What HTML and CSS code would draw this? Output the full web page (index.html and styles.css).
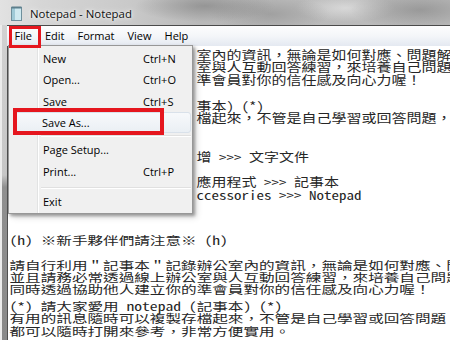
FILE: index.html
```html
<!DOCTYPE html>
<html lang="zh-Hant">
<head>
<meta charset="utf-8">
<title>Notepad - Notepad</title>
<link rel="stylesheet" href="styles.css">
</head>
<body>
<div class="window">
  <div class="titlebar">
    <svg class="app-icon" width="12" height="15" viewBox="0 0 12 15">
      <rect x="0.5" y="1.5" width="10" height="13" fill="#cfe9f0" stroke="#6f8f9c"/>
      <rect x="1" y="2" width="3" height="12" fill="#9fc9d6"/>
      <rect x="0.5" y="0.5" width="10" height="2" fill="#5d7f8c"/>
    </svg>
    <span class="title">Notepad - Notepad</span>
  </div>
  <div class="body">
    <div class="frame-left"></div>
    <div class="main">
      <nav class="menubar">
        <span class="menu-item">File</span>
        <span class="menu-item">Edit</span>
        <span class="menu-item">Format</span>
        <span class="menu-item">View</span>
        <span class="menu-item">Help</span>
      </nav>
      <div class="editor">
        <div class="page page-top">
          <div class="line">室內的資訊，無論是如何對應、問題解決</div>
          <div class="line">室與人互動回答練習，來培養自己問題</div>
          <div class="line">準會員對你的信任感及向心力喔！</div>
          <div class="line"></div>
          <div class="line">事本) (*)</div>
          <div class="line">檔起來，不管是自己學習或回答問題，</div>
          <div class="line"></div>
          <div class="line"></div>
          <div class="line">增 &gt;&gt;&gt; 文字文件</div>
          <div class="line"></div>
          <div class="line">應用程式 &gt;&gt;&gt; 記事本</div>
          <div class="line">ccessories &gt;&gt;&gt; Notepad</div>
        </div>
        <div class="page page-bottom">
          <div class="para">
            <div class="line">(h) ※新手夥伴們請注意※ (h)</div>
          </div>
          <div class="para">
            <div class="line">請自行利用＂記事本＂記錄辦公室內的資訊，無論是如何對應、問題解決</div>
            <div class="line">並且請務必常透過線上辦公室與人互動回答練習，來培養自己問題</div>
            <div class="line">同時透過協助他人建立你的準會員對你的信任感及向心力喔！</div>
          </div>
          <div class="para">
            <div class="line">(*) 請大家愛用 notepad (記事本) (*)</div>
            <div class="line">有用的訊息隨時可以複製存檔起來，不管是自己學習或回答問題，</div>
            <div class="line">都可以隨時打開來參考，非常方便實用。</div>
          </div>
        </div>
      </div>
    </div>
  </div>

  <div class="dropdown">
    <div class="dd-item"><span class="dd-label">New</span><span class="dd-key">Ctrl+N</span></div>
    <div class="dd-item"><span class="dd-label">Open...</span><span class="dd-key">Ctrl+O</span></div>
    <div class="dd-item"><span class="dd-label">Save</span><span class="dd-key">Ctrl+S</span></div>
    <div class="dd-item is-hover"><span class="dd-label">Save As...</span><span class="dd-key"></span></div>
    <div class="dd-sep sep-a"></div>
    <div class="dd-item"><span class="dd-label">Page Setup...</span><span class="dd-key"></span></div>
    <div class="dd-item"><span class="dd-label">Print...</span><span class="dd-key">Ctrl+P</span></div>
    <div class="dd-sep sep-b"></div>
    <div class="dd-item"><span class="dd-label">Exit</span><span class="dd-key"></span></div>
  </div>

  <div class="mark mark-file"></div>
  <div class="mark mark-saveas"></div>
</div>
</body>
</html>
```

FILE: styles.css
```css
* { box-sizing: border-box; }
html, body { margin: 0; padding: 0; }
body {
  width: 450px;
  height: 340px;
  overflow: hidden;
  background: #fff;
  font-family: "Open Sans", "Noto Sans", sans-serif;
}
.window {
  position: relative;
  width: 450px;
  height: 340px;
  overflow: hidden;
  display: flex;
  flex-direction: column;
}
.titlebar {
  height: 25px;
  flex: none;
  display: flex;
  align-items: center;
  gap: 7px;
  padding-left: 11px;
  background:
    radial-gradient(ellipse 70px 16px at 205px 6px, rgba(120,120,120,.55), rgba(120,120,120,0)),
    radial-gradient(ellipse 60px 18px at 270px 14px, rgba(135,135,135,.5), rgba(135,135,135,0)),
    radial-gradient(ellipse 70px 20px at 420px 10px, rgba(125,125,125,.55), rgba(125,125,125,0)),
    radial-gradient(ellipse 50px 14px at 345px 8px, rgba(235,235,235,.6), rgba(235,235,235,0)),
    linear-gradient(90deg, #e2e2e2 0, #d6d6d6 40px, #c9c9c9 130px, #b9b9b9 200px, #bcbcbc 450px);
}
.app-icon { flex: none; margin-top: 1px; }
.title {
  font-size: 11.4px;
  color: #111;
  text-shadow: 0 0 6px rgba(255,255,255,.9), 0 0 3px rgba(255,255,255,.9);
  margin-top: 1px;
}
.body {
  flex: 1;
  display: flex;
  min-height: 0;
}
.frame-left {
  width: 7px;
  flex: none;
  border-left: 2px solid #ececec;
  background: linear-gradient(#d2d2d2 0, #c6c6c6 150px, #8f8f8f 162px, #8a8a8a 100%);
}
.main {
  flex: 1;
  display: flex;
  flex-direction: column;
  min-width: 0;
}
.menubar {
  height: 21px;
  flex: none;
  display: flex;
  align-items: center;
  padding-left: 1px;
  border-top: 1px solid #4a4a4a;
  background: linear-gradient(#fdfdfe 0, #f4f6f9 50%, #e4e9f1 100%);
}
.menu-item {
  font-size: 11px;
  color: #000;
  padding: 0 6.5px;
  line-height: 20px;
}
.editor {
  flex: 1;
  background: #fff;
  border-left: 1px solid #505050;
  padding-top: 2.6px;
  font-family: "Noto Sans Mono CJK TC", "Noto Sans CJK TC", monospace;
  color: #262626;
  overflow: hidden;
}
.line {
  white-space: pre;
}
.page-top { padding-left: 188.5px; }
.page-top .line {
  font-size: 15px;
  height: 12.75px;
  line-height: 12.75px;
  transform: scaleY(.82);
}
.page-bottom {
  padding-left: 1.5px;
  padding-top: 32.9px;
}
.page-bottom .line {
  font-size: 15.6px;
  height: 12.2px;
  line-height: 12.2px;
  transform: scaleY(.74);
}
.page-bottom .para + .para { margin-top: 5px; }
.page-bottom .para:first-child { margin-bottom: 12px; }

/* dropdown menu */
.dropdown {
  position: absolute;
  left: 8px;
  top: 45px;
  width: 185px;
  padding: 2px 1px 1px 2px;
  background:
    linear-gradient(90deg, transparent 28px, #e2e3e3 28px, #e2e3e3 29px, #fff 29px, #fff 30px, transparent 30px),
    #f0f0f0;
  border: 1px solid #979797;
  box-shadow: 2px 2px 3px rgba(0,0,0,.35), 4px 4px 6px rgba(0,0,0,.12);
  font-size: 11px;
  color: #000;
}
.dd-item {
  height: 21.3px;
  display: flex;
  align-items: center;
  padding-left: 31px;
  border: 1px solid transparent;
  border-radius: 3px;
}
.dd-label { flex: none; width: 100px; }
.dd-key { flex: none; }
.dd-item.is-hover {
  margin-left: 4px;
  padding-left: 26px;
  border-color: #d9e1ea;
  background: linear-gradient(#f7f9fb, #eaeff4);
}
.dd-sep {
  margin-left: 30px;
  border-top: 1px solid #e0e0e0;
  border-bottom: 1px solid #fff;
}
.sep-a { margin-top: 2px; margin-bottom: 2px; }
.sep-b { margin-top: 5px; margin-bottom: 2px; }

/* tutorial highlight marks */
.mark {
  position: absolute;
  border: 4px solid #e5161e;
}
.mark-file { left: 9px; top: 26px; width: 32px; height: 22px; border-width: 3.5px; }
.mark-saveas { left: 13px; top: 108px; width: 151px; height: 27px; }
```
